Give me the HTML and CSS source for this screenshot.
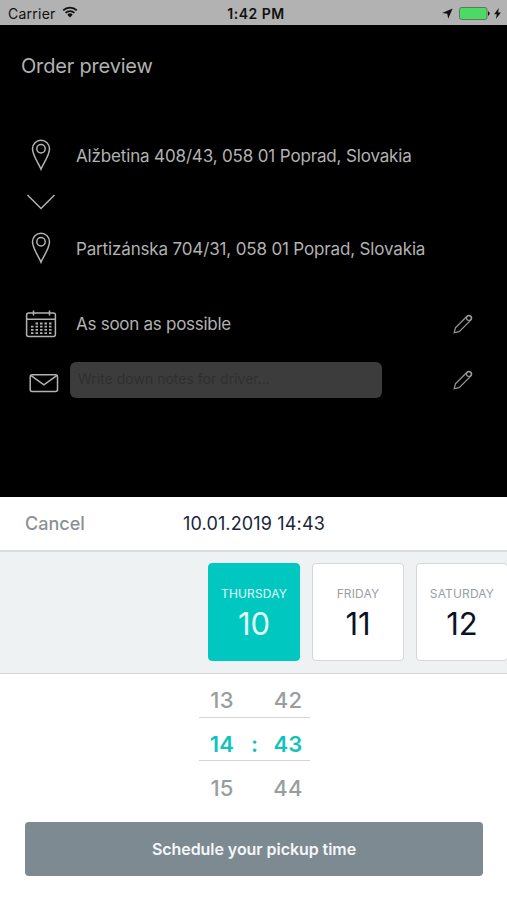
FILE: index.html
```html
<!DOCTYPE html>
<html lang="en">
<head>
	<meta charset="UTF-8">
	<title>Order preview</title>
	<link rel="stylesheet" href="styles.css">
</head>
<body>
	<div class="status-bar">
		<div class="status-left">
			<span class="carrier">Carrier</span>
			<svg class="wifi" width="16" height="12" viewBox="0 0 16 12">
				<path d="M1.2 4.4a9.6 9.6 0 0 1 13.6 0M3.6 6.9a6.2 6.2 0 0 1 8.8 0" fill="none" stroke="#111" stroke-width="1.8"/>
				<path d="M5.3 8.7a3.8 3.8 0 0 1 5.4 0L8 11.4z" fill="#111"/>
			</svg>
		</div>
		<div class="time">1:42 PM</div>
		<div class="status-right">
			<svg width="11" height="11" viewBox="0 0 11 11"><path d="M10.6.5L6.2 10.7 5.3 5.7.2 4.9z" fill="#111"/></svg>
			<svg class="battery" width="31" height="13" viewBox="0 0 31 13">
				<rect x=".5" y=".5" width="27.5" height="12" rx="2" fill="#4cd964" stroke="#5c7a60"/>
				<path d="M29 4.3q1.6.5 1.6 2.2T29 8.7z" fill="#111"/>
			</svg>
			<svg class="bolt" width="7" height="11" viewBox="0 0 7 11"><path d="M4.8 0L.1 6.2h2.7L1.8 11 6.9 4.5H4.100z" fill="#111"/></svg>
		</div>
	</div>

	<div class="preview">
		<h1>Order preview</h1>
		<div class="row">
			<svg class="icon" width="20" height="32" viewBox="0 0 20 32">
				<path d="M10 30.2C7.5 24 1.5 16.5 1.5 9.8a8.5 8.5 0 0 1 17 0C18.5 16.5 12.5 24 10 30.2z"/>
				<circle cx="10" cy="9.7" r="4.2"/>
			</svg>
			<p class="addr">Alžbetina 408/43, 058 01 Poprad, Slovakia</p>
		</div>
		<div class="row row-arrow">
			<svg class="icon" width="30" height="18" viewBox="0 0 30 18"><path d="M1.500 2L15 15.500 28.500 2"/></svg>
		</div>
		<div class="row">
			<svg class="icon" width="20" height="32" viewBox="0 0 20 32">
				<path d="M10 30.2C7.5 24 1.5 16.5 1.5 9.8a8.5 8.5 0 0 1 17 0C18.5 16.5 12.5 24 10 30.2z"/>
				<circle cx="10" cy="9.7" r="4.2"/>
			</svg>
			<p class="addr">Partizánska 704/31, 058 01 Poprad, Slovakia</p>
		</div>
		<div class="row row-date">
			<svg class="icon" width="32" height="28" viewBox="0 0 32 28">
				<rect x="1.6" y="3" width="28.8" height="23.6" rx="2"/>
				<path d="M1.6 9.2h28.8M8.5.5v5M24.5.5v5"/>
				<path class="dots" d="M10.5 13.5h16M6 16.7h20.5M6 19.9h20.5M6 23.1h20.5"/>
			</svg>
			<p class="when">As soon as possible</p>
			<svg class="pencil" width="20" height="20" viewBox="0 0 20 20">
				<path d="M1.2 18.8l1.2-5L14.2 2q1.900-1.500 3.600.2t.2 3.600L6.200 17.600z"/>
				<circle cx="15.9" cy="4.1" r="2.4"/>
			</svg>
		</div>
		<div class="row row-note">
			<svg class="icon" width="30" height="20" viewBox="0 0 30 20">
				<rect x="1.2" y="1.7" width="27.3" height="16.8" rx="2"/>
				<path d="M1.8 2.3L14.9 11.8 28 2.3"/>
			</svg>
			<div class="note">Write down notes for driver...</div>
			<svg class="pencil" width="20" height="20" viewBox="0 0 20 20">
				<path d="M1.2 18.8l1.2-5L14.2 2q1.900-1.500 3.600.2t.2 3.600L6.200 17.600z"/>
				<circle cx="15.9" cy="4.1" r="2.4"/>
			</svg>
		</div>
	</div>

	<div class="sheet">
		<div class="sheet-head">
			<a class="cancel">Cancel</a>
			<span class="chosen">10.01.2019 14:43</span>
		</div>
		<ul class="days">
			<li class="active"><span>THURSDAY</span><b>10</b></li>
			<li><span>FRIDAY</span><b>11</b></li>
			<li><span>SATURDAY</span><b>12</b></li>
		</ul>
		<div class="picker">
			<div class="pick-row"><span>13</span><i></i><span>42</span></div>
			<div class="pick-row now"><span>14</span><i>:</i><span>43</span></div>
			<div class="pick-row"><span>15</span><i></i><span>44</span></div>
		</div>
		<button class="submit">Schedule your pickup time</button>
	</div>
</body>
</html>
```
FILE: styles.css
```css
*{
	margin: 0;
	padding: 0;
	box-sizing: border-box;
}
body{
	width: 507px;
	height: 900px;
	overflow: hidden;
	background: #000;
	font-family: Inter, "Liberation Sans", sans-serif;
	display: flex;
	flex-direction: column;
}
ul{
	list-style: none;
}
svg{
	display: block;
	flex: none;
}
/* status bar */
.status-bar{
	height: 25px;
	background: #b2b2b2;
	color: #111;
	display: grid;
	grid-template-columns: 1fr auto 1fr;
	align-items: center;
	padding: 2px 6px 0 8px;
	font-size: 14px;
}
.status-left,.status-right{
	display: flex;
	align-items: center;
}
.carrier{
	letter-spacing: .25px;
}
.wifi{
	margin-left: 6px;
	margin-top: -3px;
}
.time{
	padding-left: 3px;
	font-weight: 600;
	letter-spacing: .5px;
}
.status-right{
	justify-content: flex-end;
}
.battery{
	margin-left: 6px;
}
.bolt{
	margin-left: 4px;
}
/* order */
.preview{
	height: 472px;
	color: #b2b2b2;
}
h1{
	height: 106px;
	padding-left: 21px;
	line-height: 83px;
	font-size: 20px;
	font-weight: 400;
	letter-spacing: -.18px;
}
.row{
	height: 48px;
	display: flex;
	align-items: center;
	padding: 0 34px 0 76px;
	font-size: 17px;
}
.row-arrow{
	height: 45px;
}
.addr{
	padding-top: 1px;
	letter-spacing: -.15px;
}
.when{
	letter-spacing: -.27px;
}
.icon{
	fill: none;
	stroke: #b2b2b2;
	stroke-width: 1.5;
	margin-left: -45px;
	margin-right: 25px;
}
.row-arrow .icon{
	margin-left: -50px;
}
.row-date{
	margin-top: 28px;
}
.row-date .icon{
	margin-left: -51px;
	margin-right: 19px;
}
.icon .dots{
	stroke-width: 1.8;
	stroke-dasharray: 2.5 2;
}
.pencil{
	margin-left: auto;
	fill: none;
	stroke: #9a9a9a;
	stroke-width: 1.2;
}
.row-note{
	height: 64px;
}
.row-note .icon{
	margin: 5px 11px 0 -47px;
}
.note{
	width: 312px;
	height: 36px;
	line-height: 34px;
	padding-left: 8px;
	border-radius: 6px;
	background: #3c3c3c;
	color: #2f2f2f;
	font-size: 14px;
}
/* date and time sheet */
.sheet{
	height: 403px;
	background: #fff;
}
.sheet-head{
	height: 55px;
	border-bottom: 2px solid #d8dcdd;
	display: grid;
	grid-template-columns: 158px 1fr;
	align-items: center;
	padding-left: 25px;
	font-size: 18px;
}
.cancel{
	color: #8b9095;
	font-weight: 500;
}
.chosen{
	color: #17263a;
	letter-spacing: .15px;
}
.days{
	height: 122px;
	padding: 11px 0 0 208px;
	background: #eef2f3;
	border-bottom: 1px solid #d3d7d8;
	display: flex;
	gap: 12px;
	overflow: hidden;
}
.days li{
	flex: none;
	width: 92px;
	height: 98px;
	padding-top: 21px;
	border: 1px solid #d4d8da;
	border-radius: 4px;
	background: #fff;
	text-align: center;
}
.days span{
	display: block;
	line-height: 18px;
	font-size: 12px;
	letter-spacing: .15px;
	color: #999ea3;
}
.days b{
	display: block;
	line-height: 42px;
	font-size: 31px;
	font-weight: 400;
	color: #0b1226;
}
.days .active{
	background: #00c8c1;
	border-color: #00c8c1;
}
.active span,.active b{
	color: #e2fbfa;
}
.picker{
	width: 111px;
	margin-left: 199px;
	padding-top: 8px;
	height: 148px;
}
.pick-row{
	height: 44px;
	line-height: 36px;
	display: grid;
	grid-template-columns: 46px 19px 48px;
	text-align: center;
	font-size: 22px;
	font-weight: 500;
	letter-spacing: .2px;
	color: #999d9f;
}
.pick-row i{
	font-style: normal;
}
.pick-row.now{
	line-height: 52px;
	margin-top: -9px;
	border-top: 1px solid #d2d5d6;
	border-bottom: 1px solid #d2d5d6;
	color: #13c2bd;
	font-weight: 600;
}
.now + .pick-row{
	line-height: 54px;
}
.submit{
	display: block;
	width: 458px;
	height: 54px;
	margin-left: 25px;
	border: none;
	border-radius: 4px;
	background: #7e8a92;
	color: #f4f7f9;
	font-family: inherit;
	font-size: 16px;
	font-weight: 600;
	letter-spacing: -.06px;
}
```
